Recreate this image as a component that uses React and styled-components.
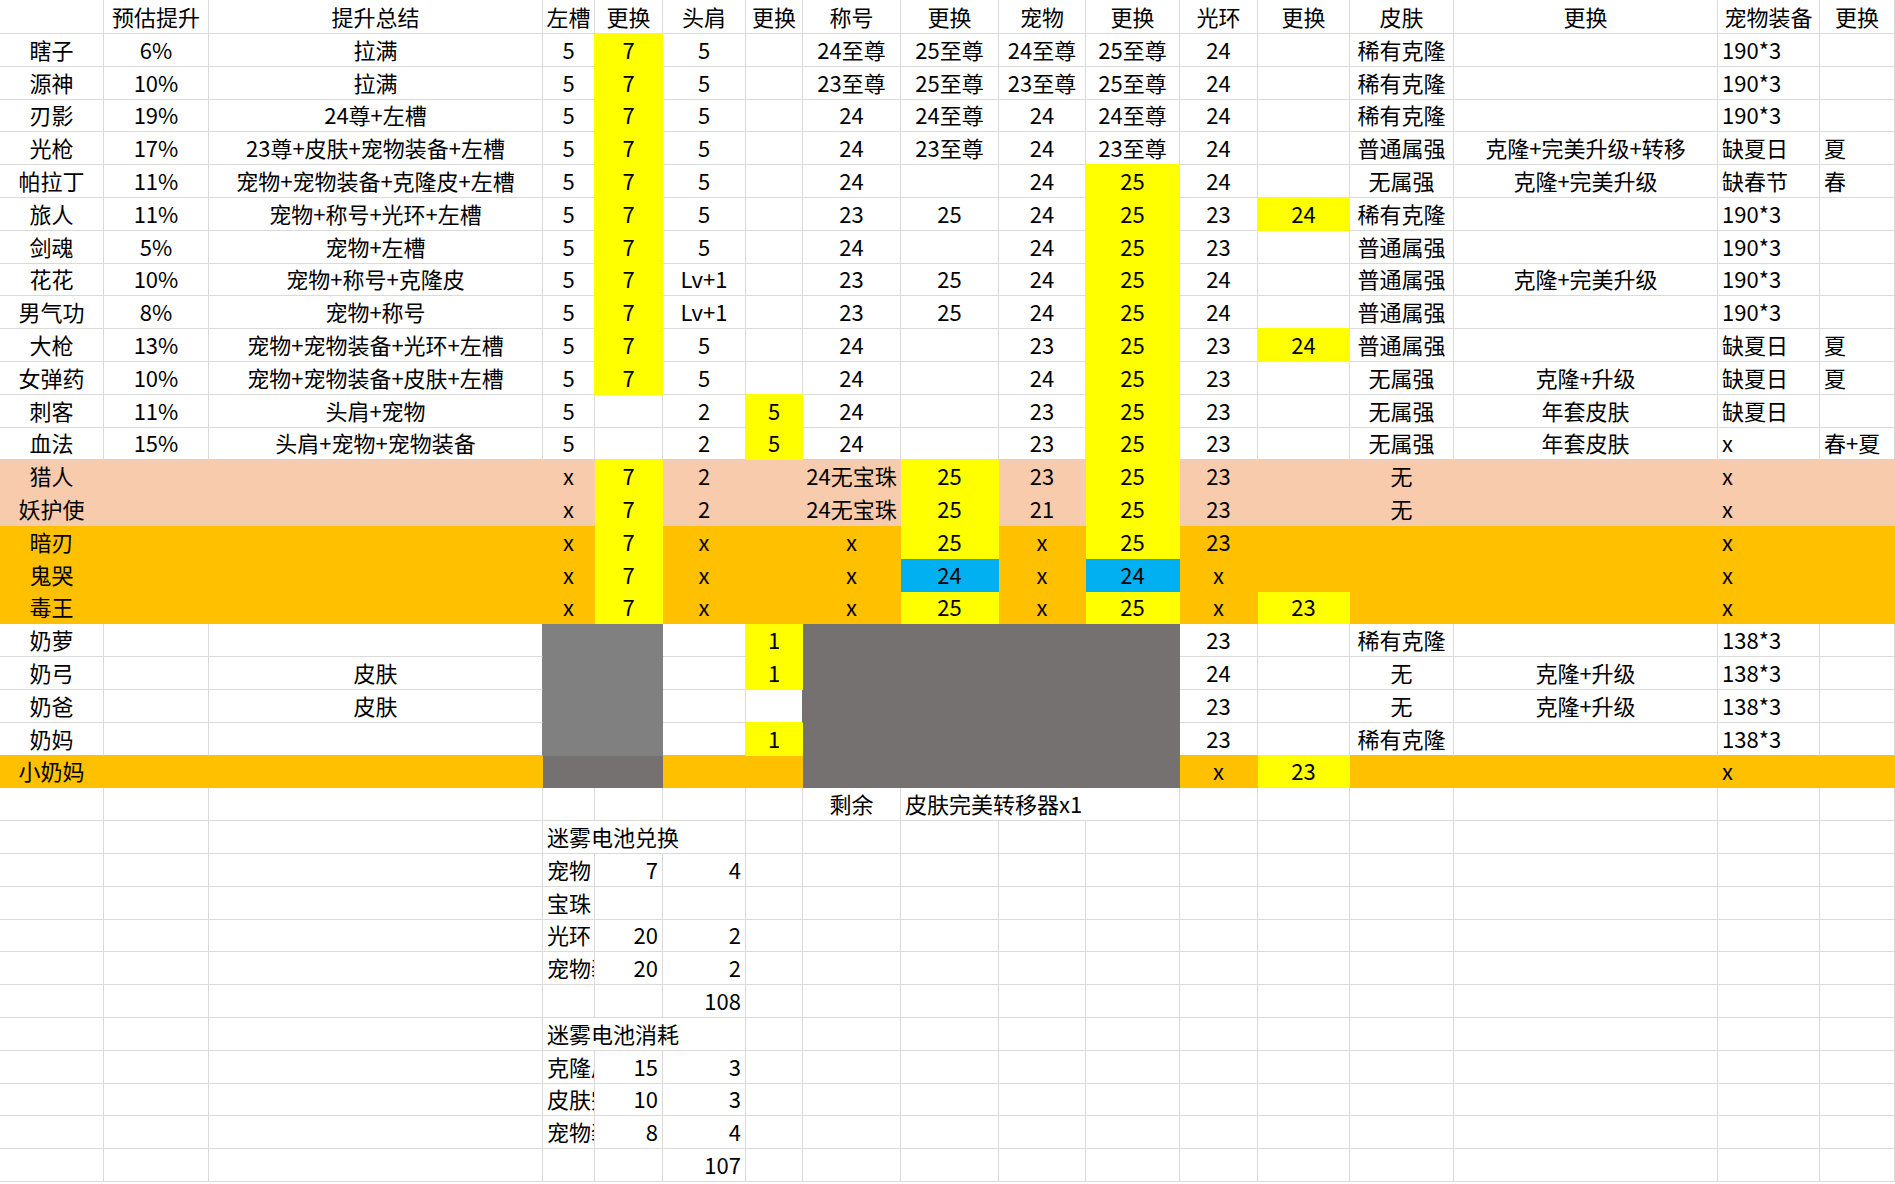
import React from 'react';
import styled, { createGlobalStyle } from 'styled-components';

const GRID = '#dadada';
const YELLOW = '#ffff00';
const PEACH = '#f8cbad';
const ORANGE = '#ffc000';
const BLUE = '#00b0f0';
const GRAY = '#808080';
const DARK = '#767171';

const COLS = [104, 105, 334, 52, 68, 83, 57, 98, 98, 87, 94, 78, 92, 104, 264, 102, 75];

const y = (t = '') => ({ t, fill: YELLOW });
const b = (t = '') => ({ t, fill: BLUE });
const g = () => ({ t: '', fill: GRAY });
const d = (t = '') => ({ t, fill: DARK });

const header = ['', '预估提升', '提升总结', '左槽', '更换', '头肩', '更换', '称号', '更换', '宠物', '更换', '光环', '更换', '皮肤', '更换', '宠物装备', '更换'];

const mainRows = [
    ['瞎子', '6%', '拉满', '5', y('7'), '5', '', '24至尊', '25至尊', '24至尊', '25至尊', '24', '', '稀有克隆', '', '190*3', ''],
    ['源神', '10%', '拉满', '5', y('7'), '5', '', '23至尊', '25至尊', '23至尊', '25至尊', '24', '', '稀有克隆', '', '190*3', ''],
    ['刃影', '19%', '24尊+左槽', '5', y('7'), '5', '', '24', '24至尊', '24', '24至尊', '24', '', '稀有克隆', '', '190*3', ''],
    ['光枪', '17%', '23尊+皮肤+宠物装备+左槽', '5', y('7'), '5', '', '24', '23至尊', '24', '23至尊', '24', '', '普通属强', '克隆+完美升级+转移', '缺夏日', '夏'],
    ['帕拉丁', '11%', '宠物+宠物装备+克隆皮+左槽', '5', y('7'), '5', '', '24', '', '24', y('25'), '24', '', '无属强', '克隆+完美升级', '缺春节', '春'],
    ['旅人', '11%', '宠物+称号+光环+左槽', '5', y('7'), '5', '', '23', '25', '24', y('25'), '23', y('24'), '稀有克隆', '', '190*3', ''],
    ['剑魂', '5%', '宠物+左槽', '5', y('7'), '5', '', '24', '', '24', y('25'), '23', '', '普通属强', '', '190*3', ''],
    ['花花', '10%', '宠物+称号+克隆皮', '5', y('7'), 'Lv+1', '', '23', '25', '24', y('25'), '24', '', '普通属强', '克隆+完美升级', '190*3', ''],
    ['男气功', '8%', '宠物+称号', '5', y('7'), 'Lv+1', '', '23', '25', '24', y('25'), '24', '', '普通属强', '', '190*3', ''],
    ['大枪', '13%', '宠物+宠物装备+光环+左槽', '5', y('7'), '5', '', '24', '', '23', y('25'), '23', y('24'), '普通属强', '', '缺夏日', '夏'],
    ['女弹药', '10%', '宠物+宠物装备+皮肤+左槽', '5', y('7'), '5', '', '24', '', '24', y('25'), '23', '', '无属强', '克隆+升级', '缺夏日', '夏'],
    ['刺客', '11%', '头肩+宠物', '5', '', '2', y('5'), '24', '', '23', y('25'), '23', '', '无属强', '年套皮肤', '缺夏日', ''],
    ['血法', '15%', '头肩+宠物+宠物装备', '5', '', '2', y('5'), '24', '', '23', y('25'), '23', '', '无属强', '年套皮肤', 'x', '春+夏'],
].map((cells) => ({ kind: 'main', cells }));

const peachRows = [
    ['猎人', '', '', 'x', y('7'), '2', '', '24无宝珠', y('25'), '23', y('25'), '23', '', '无', '', 'x', ''],
    ['妖护使', '', '', 'x', y('7'), '2', '', '24无宝珠', y('25'), '21', y('25'), '23', '', '无', '', 'x', ''],
].map((cells) => ({ kind: 'main', fill: PEACH, cells }));

const orangeRows = [
    ['暗刃', '', '', 'x', y('7'), 'x', '', 'x', y('25'), 'x', y('25'), '23', '', '', '', 'x', ''],
    ['鬼哭', '', '', 'x', y('7'), 'x', '', 'x', b('24'), 'x', b('24'), 'x', '', '', '', 'x', ''],
    ['毒王', '', '', 'x', y('7'), 'x', '', 'x', y('25'), 'x', y('25'), 'x', y('23'), '', '', 'x', ''],
].map((cells) => ({ kind: 'main', fill: ORANGE, cells }));

const healerRows = [
    { kind: 'main', cells: ['奶萝', '', '', g(), g(), '', y('1'), d(), d(), d(), d(), '23', '', '稀有克隆', '', '138*3', ''] },
    { kind: 'main', cells: ['奶弓', '', '皮肤', g(), g(), '', y('1'), d(), d(), d(), d(), '24', '', '无', '克隆+升级', '138*3', ''] },
    { kind: 'main', cells: ['奶爸', '', '皮肤', g(), g(), '', '', d(), d(), d(), d(), '23', '', '无', '克隆+升级', '138*3', ''] },
    { kind: 'main', cells: ['奶妈', '', '', g(), g(), '', y('1'), d(), d(), d(), d(), '23', '', '稀有克隆', '', '138*3', ''] },
    { kind: 'main', fill: ORANGE, cells: ['小奶妈', '', '', d(), d(), '', '', d(), d(), d(), d(), 'x', y('23'), '', '', 'x', ''] },
];

// note rows: sparse { col: value }, a span swallows the cells after it
const note = (entries) => {
    const cells = Array(COLS.length).fill('');
    Object.entries(entries).forEach(([col, v]) => {
        const i = Number(col);
        cells[i] = v;
        if (v && v.span) for (let k = 1; k < v.span; k++) cells[i + k] = null;
    });
    return { kind: 'note', cells };
};

const noteRows = [
    note({ 7: '剩余', 8: { t: '皮肤完美转移器x1', span: 3, align: 'left' } }),
    note({ 3: { t: '迷雾电池兑换', span: 3, align: 'left' } }),
    note({ 3: '宠物', 4: '7', 5: '4' }),
    note({ 3: '宝珠' }),
    note({ 3: '光环', 4: '20', 5: '2' }),
    note({ 3: '宠物装备', 4: '20', 5: '2' }),
    note({ 5: '108' }),
    note({ 3: { t: '迷雾电池消耗', span: 3, align: 'left' } }),
    note({ 3: '克隆皮肤', 4: '15', 5: '3' }),
    note({ 3: '皮肤完美', 4: '10', 5: '3' }),
    note({ 3: '宠物装备', 4: '8', 5: '4' }),
    note({ 5: '107' }),
];

const rows = [{ kind: 'head', cells: header }, ...mainRows, ...peachRows, ...orangeRows, ...healerRows, ...noteRows];

const alignFor = (kind, col) => {
    if (kind === 'main' && col >= 15) return 'left';
    if (kind === 'note') {
        if (col === 3) return 'left';
        if (col === 4 || col === 5) return 'right';
    }
    return 'center';
};

// resolve each cell's fill, spans included, so gridlines can hide under fills
const table = rows.map((row) => {
    const out = [];
    let owner = null;
    row.cells.forEach((raw, col) => {
        if (raw === null) {
            out.push({ covered: true, fill: owner.fill });
            return;
        }
        const cell = typeof raw === 'string' ? { t: raw } : raw;
        owner = {
            t: cell.t,
            span: cell.span || 1,
            align: cell.align || alignFor(row.kind, col),
            fill: cell.fill || row.fill || null,
        };
        out.push(owner);
    });
    return out;
});

const fillAt = (r, c) => (table[r] && table[r][c] ? table[r][c].fill : null);

const App = () => {
    return (
        <>
            <GlobalStyle />
            <Viewport>
                <Sheet>
                    {table.map((row, r) =>
                        row.map((cell, c) => {
                            if (cell.covered) return null;
                            const last = c + cell.span - 1;
                            return (
                                <Cell
                                    key={`${r}-${c}`}
                                    $fill={cell.fill}
                                    $right={cell.fill || fillAt(r, last + 1) || GRID}
                                    $bottom={cell.fill || fillAt(r + 1, c) || GRID}
                                    $align={cell.align}
                                    $span={cell.span}
                                >
                                    {cell.t}
                                </Cell>
                            );
                        })
                    )}
                </Sheet>
            </Viewport>
        </>
    );
};

const GlobalStyle = createGlobalStyle`
    html, body {
        margin: 0;
        padding: 0;
        overflow: hidden;
        background: #ffffff;
    }
`;

const Viewport = styled.div`
    width: 1895px;
    height: 1184px;
    overflow: hidden;
    background: #ffffff;
`;

const Sheet = styled.div`
    display: grid;
    grid-template-columns: ${COLS.map((w) => `${w}px`).join(' ')};
    grid-template-rows: 34px;
    grid-auto-rows: 32.8px;
    font-family: 'Noto Sans CJK SC', 'Noto Sans', sans-serif;
    font-size: 22px;
    color: #000000;
`;

const Cell = styled.div`
    box-sizing: border-box;
    grid-column: span ${(props) => props.$span};
    display: flex;
    align-items: center;
    justify-content: ${(props) =>
        props.$align === 'left' ? 'flex-start' : props.$align === 'right' ? 'flex-end' : 'center'};
    padding: 0 4px 2px;
    background: ${(props) => props.$fill || '#ffffff'};
    border-right: 1px solid ${(props) => props.$right};
    border-bottom: 1px solid ${(props) => props.$bottom};
    white-space: nowrap;
    overflow: hidden;
    line-height: 1;
`;

export default App;
